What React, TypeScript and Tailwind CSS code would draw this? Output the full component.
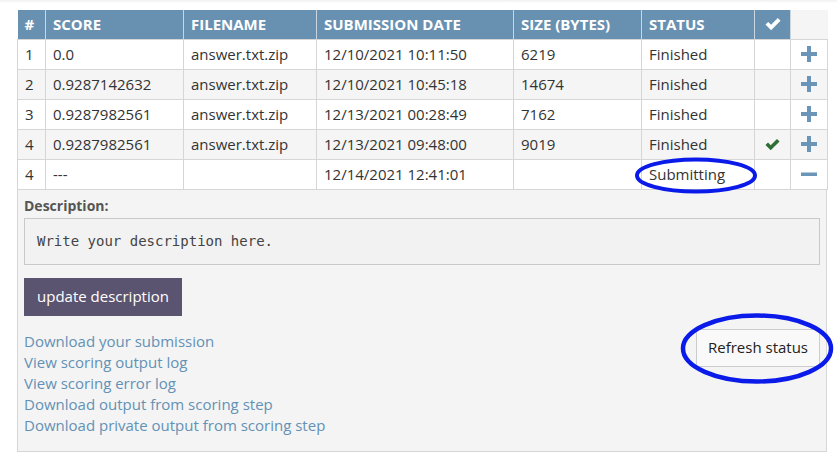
import React from "react";

type Row = {
  num: string;
  score: string;
  filename: string;
  date: string;
  size: string;
  status: string;
  picked?: boolean;
  pending?: boolean;
};

const rows: Row[] = [
  { num: "1", score: "0.0", filename: "answer.txt.zip", date: "12/10/2021 10:11:50", size: "6219", status: "Finished" },
  { num: "2", score: "0.9287142632", filename: "answer.txt.zip", date: "12/10/2021 10:45:18", size: "14674", status: "Finished" },
  { num: "3", score: "0.9287982561", filename: "answer.txt.zip", date: "12/13/2021 00:28:49", size: "7162", status: "Finished" },
  { num: "4", score: "0.9287982561", filename: "answer.txt.zip", date: "12/13/2021 09:48:00", size: "9019", status: "Finished", picked: true },
  { num: "4", score: "---", filename: "", date: "12/14/2021 12:41:01", size: "", status: "Submitting", pending: true },
];

const links = [
  "Download your submission",
  "View scoring output log",
  "View scoring error log",
  "Download output from scoring step",
  "Download private output from scoring step",
];

const Check = ({ className }: { className: string }) => (
  <svg viewBox="0 0 16 16" className={className} fill="currentColor">
    <path d="M0.5 8.6 L3.2 5.9 L6.1 8.8 L12.8 2.1 L15.5 4.8 L6.1 14.2 Z" />
  </svg>
);

const Plus = () => (
  <svg viewBox="0 0 16 16" className="h-[16px] w-[16px] text-[#6a95b9]" fill="currentColor">
    <rect x="6" y="0" width="4" height="16" />
    <rect x="0" y="6" width="16" height="4" />
  </svg>
);

const Minus = () => (
  <svg viewBox="0 0 16 16" className="h-[16px] w-[16px] text-[#6a95b9]" fill="currentColor">
    <rect x="0" y="6.5" width="16" height="3.5" />
  </svg>
);

const th = "border-x border-[#c9d6e0] px-[7px] text-left font-bold";
const td = "border border-[#d6d6d6] px-[7px] pt-[1px]";

export default function App() {
  return (
    <div
      className="relative h-[463px] w-[837px] overflow-hidden bg-white text-[15px] text-[#333]"
      style={{ fontFamily: '"Open Sans", "Noto Sans", sans-serif' }}
    >
      <div className="h-[3px] bg-gradient-to-b from-[#f0f0f0] to-white" />
      <div className="ml-[17px] mt-[7px] w-[810px]">
        <table className="w-full table-fixed border-collapse">
          <colgroup>
            <col className="w-[28px]" />
            <col className="w-[138px]" />
            <col className="w-[133px]" />
            <col className="w-[197px]" />
            <col className="w-[128px]" />
            <col className="w-[113px]" />
            <col className="w-[36px]" />
            <col className="w-[37px]" />
          </colgroup>
          <thead>
            <tr className="h-[29px] text-white">
              <th className={`${th} bg-[#6891b1] border-l-0`}>#</th>
              <th className={`${th} bg-[#6891b1]`}>SCORE</th>
              <th className={`${th} bg-[#6891b1]`}>FILENAME</th>
              <th className={`${th} bg-[#6891b1]`}>SUBMISSION DATE</th>
              <th className={`${th} bg-[#6891b1]`}>SIZE (BYTES)</th>
              <th className={`${th} bg-[#6891b1]`}>STATUS</th>
              <th className="border-x border-[#c9d6e0] bg-[#6891b1] p-0">
                <div className="flex justify-center">
                  <Check className="h-[16px] w-[16px]" />
                </div>
              </th>
              <th className="bg-[#f5f5f5]" />
            </tr>
          </thead>
          <tbody>
            {rows.map((r, i) => (
              <tr key={i} className={`h-[30px] ${i % 2 === 1 ? "bg-[#f5f5f5]" : "bg-white"}`}>
                <td className={td}>{r.num}</td>
                <td className={td}>{r.score}</td>
                <td className={td}>{r.filename}</td>
                <td className={td}>{r.date}</td>
                <td className={td}>{r.size}</td>
                <td className={td}>{r.status}</td>
                <td className="border border-[#d6d6d6] p-0">
                  {r.picked && (
                    <div className="flex justify-center">
                      <Check className="h-[15px] w-[15px] text-[#2f6e35]" />
                    </div>
                  )}
                </td>
                <td className="border border-[#d6d6d6] p-0">
                  <div className="flex justify-center">{r.pending ? <Minus /> : <Plus />}</div>
                </td>
              </tr>
            ))}
          </tbody>
        </table>

        <div className="h-[262px] border border-t-0 border-[#d6d6d6] bg-[#f4f4f4] px-[6px] pt-[6px]">
          <div className="text-[14px] font-bold leading-[20px] text-[#555]">Description:</div>
          <div
            className="mt-[2px] h-[47px] border border-[#c9c9c9] bg-[#f2f2f2] px-[12px] pt-[12px] text-[14px] text-[#444]"
            style={{ fontFamily: '"DejaVu Sans Mono", monospace' }}
          >
            Write your description here.
          </div>
          <button className="mt-[13px] h-[38px] bg-[#5b5470] px-[13px] text-[15px] text-white">
            update description
          </button>
          <div className="mt-[15px] flex items-start justify-between">
            <div className="flex flex-col text-[15px] leading-[21px] text-[#6391b5]">
              {links.map((l) => (
                <a key={l} href="#">
                  {l}
                </a>
              ))}
            </div>
            <button className="-mt-[2px] h-[38px] w-[124px] border border-[#cccccc] bg-[#f9f9f9] text-[15px] text-[#222]">
              Refresh status
            </button>
          </div>
        </div>
      </div>

      <svg className="pointer-events-none absolute left-0 top-0" width="837" height="463">
        <ellipse cx="696" cy="175.5" rx="59" ry="16" fill="none" stroke="#0a1ae8" strokeWidth="4" />
        <ellipse cx="757" cy="348.5" rx="74" ry="33" fill="none" stroke="#0a1ae8" strokeWidth="4.5" />
      </svg>
    </div>
  );
}
